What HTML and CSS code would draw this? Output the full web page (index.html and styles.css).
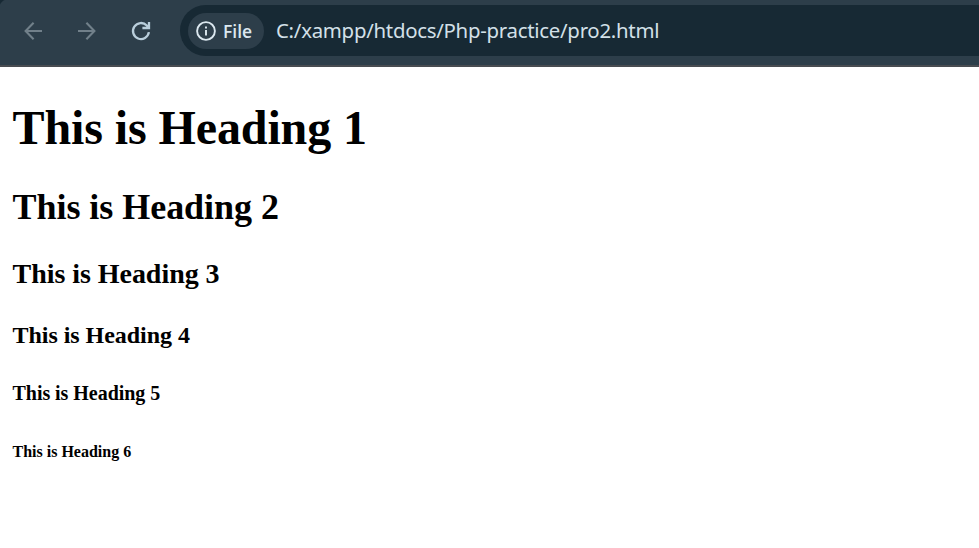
FILE: index.html
```html
<!DOCTYPE html>
<html lang="en">
<head>
<meta charset="utf-8">
<title>pro2.html</title>
<link rel="stylesheet" href="styles.css">
</head>
<body>
<div class="toolbar">
  <div class="nav">
    <svg class="icon dim" viewBox="0 0 24 24"><path d="M21 12H5M12.6 3.8L4.6 12l8 8.2"/></svg>
    <svg class="icon dim" viewBox="0 0 24 24"><path d="M3 12H19M11.4 3.8l8 8.2-8 8.2"/></svg>
    <svg class="icon reload" viewBox="0 0 24 24"><path d="M19.9 13.2A8 8 0 1 1 17.8 6.5L19.6 8.6M20 3v6h-6.6"/></svg>
  </div>
  <div class="address">
    <div class="chip">
      <svg class="info" viewBox="0 0 20 20"><circle cx="10" cy="10" r="8.9"/><path d="M10 9v5.6M10 5.4v2"/></svg>
      <span class="chip-label">File</span>
    </div>
    <span class="url">C:/xampp/htdocs/Php-practice/pro2.html</span>
  </div>
</div>
<main class="page">
  <h1>This is Heading 1</h1>
  <h2>This is Heading 2</h2>
  <h3>This is Heading 3</h3>
  <h4>This is Heading 4</h4>
  <h5>This is Heading 5</h5>
  <h6>This is Heading 6</h6>
</main>
</body>
</html>
```
FILE: styles.css
```css
body { margin: 0; background: #fff; color: #000; overflow: hidden; }
.toolbar {
  box-sizing: border-box;
  height: 67px;
  display: flex;
  align-items: flex-start;
  padding: 5px 0 0 21px;
  background: radial-gradient(circle at 9px 9px, #2d3e4a 9.5px, #172934 10.5px) 0 0 / 9px 9px no-repeat #2d3e4a;
  border-bottom: 2px solid #484c51;
}
.nav { display: flex; gap: 30px; width: 159px; height: 51px; align-items: center; }
.icon { width: 24px; height: 24px; fill: none; stroke: #b9cedb; stroke-width: 2.3; }
.dim { stroke: #71808a; stroke-width: 2.1; }
.address {
  flex: 1;
  box-sizing: border-box;
  height: 51px;
  display: flex;
  align-items: center;
  padding-left: 8px;
  background: #172934;
  border-radius: 26px 0 0 26px;
}
.chip {
  box-sizing: border-box;
  width: 76px;
  height: 36px;
  display: flex;
  align-items: center;
  gap: 7px;
  padding-left: 8px;
  border-radius: 18px;
  background: #2d3e4a;
}
.info { width: 20px; height: 20px; fill: none; stroke: #dce8f0; stroke-width: 1.9; }
.chip-label { font: 600 17.5px/24px "Open Sans", "Noto Sans", sans-serif; color: #dce8f0; }
.url {
  margin: -2px 0 0 12px;
  font: 20.4px/28px "Noto Sans", "Open Sans", sans-serif;
  letter-spacing: -0.27px;
  color: #d3e0e8;
  white-space: nowrap;
}
.page { padding: 0 12.5px; font: 24px "Liberation Serif", serif; display: flow-root; }
h1, h2, h3, h4, h5, h6 { font-weight: 700; letter-spacing: -0.04px; }
h1 { font-size: 48px; margin: 33px 0 31px; letter-spacing: -0.1px; }
h2 { font-size: 36px; margin: 30px 0; }
h3 { font-size: 28px; margin: 28px 0; }
h4 { font-size: 24px; margin: 32px 0; }
h5 { font-size: 20px; margin: 33px 0; }
h6 { font-size: 16px; margin: 38px 0; letter-spacing: 0; }
```
